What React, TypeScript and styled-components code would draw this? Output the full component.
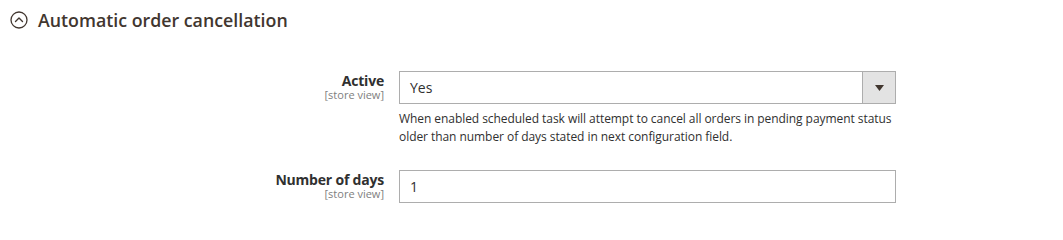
import React from "react";
import styled, { createGlobalStyle } from "styled-components";

const Global = createGlobalStyle`
  html, body { margin: 0; padding: 0; background: #ffffff; }
  body { font-family: "Open Sans", "Liberation Sans", sans-serif; color: #303030; }
  * { box-sizing: border-box; }
`;

const Page = styled.div`
  width: 1063px;
  height: 223px;
  overflow: hidden;
  background: #ffffff;
`;

const Header = styled.div`
  display: flex;
  align-items: center;
  gap: 10px;
  padding: 9px 0 0 10px;
  height: 30px;
`;

const Title = styled.h2`
  margin: 0;
  font-size: 17.8px;
  line-height: 20px;
  font-weight: 600;
  color: #41362f;
`;

const Fieldset = styled.div`
  display: grid;
  grid-template-columns: 384px 497px;
  column-gap: 15px;
  row-gap: 24px;
  padding-top: 41px;
`;

const LabelCell = styled.div`
  display: flex;
  flex-direction: column;
  align-items: flex-end;
  padding-top: 3px;
`;

const Label = styled.span`
  font-size: 14px;
  line-height: 14px;
  font-weight: 700;
  letter-spacing: -0.2px;
  color: #303030;
`;

const Scope = styled.span`
  font-size: 11px;
  line-height: 11px;
  color: #808080;
  margin-top: 1px;
`;

const Control = styled.div`
  display: flex;
  flex-direction: column;
`;

const Select = styled.div`
  display: flex;
  height: 33px;
  border: 1px solid #adadad;
  background: #ffffff;
`;

const SelectValue = styled.div`
  flex: 1;
  display: flex;
  align-items: center;
  padding-left: 10px;
  font-size: 14px;
  color: #303030;
`;

const SelectButton = styled.div`
  width: 33px;
  display: flex;
  align-items: center;
  justify-content: center;
  background: #e3e3e3;
  border-left: 1px solid #adadad;
`;

const Input = styled.div`
  height: 33px;
  border: 1px solid #adadad;
  background: #ffffff;
  display: flex;
  align-items: center;
  padding-left: 10px;
  font-size: 14px;
  color: #303030;
`;

const Note = styled.p`
  margin: 6px 0 0;
  font-size: 12px;
  line-height: 18px;
  letter-spacing: -0.06px;
  color: #303030;
`;

const Field: React.FC<{ label: string; children: React.ReactNode }> = ({ label, children }) => (
  <>
    <LabelCell>
      <Label>{label}</Label>
      <Scope>[store view]</Scope>
    </LabelCell>
    <Control>{children}</Control>
  </>
);

export default function App() {
  return (
    <Page>
      <Global />
      <Header>
        <svg width="18" height="18" viewBox="0 0 18 18">
          <circle cx="9" cy="9" r="8" fill="none" stroke="#41362f" strokeWidth="1.3" />
          <path d="M5.5 10.6 L9 7.1 L12.5 10.6" fill="none" stroke="#41362f" strokeWidth="1.4" strokeLinecap="round" strokeLinejoin="round" />
        </svg>
        <Title>Automatic order cancellation</Title>
      </Header>
      <Fieldset>
        <Field label="Active">
          <Select>
            <SelectValue>Yes</SelectValue>
            <SelectButton>
              <svg width="9" height="6" viewBox="0 0 9 6">
                <path d="M0 0 H9 L4.5 6 Z" fill="#41362f" />
              </svg>
            </SelectButton>
          </Select>
          <Note>
            When enabled scheduled task will attempt to cancel all orders in pending payment status older than number of days stated in next configuration field.
          </Note>
        </Field>
        <Field label="Number of days">
          <Input>1</Input>
        </Field>
      </Fieldset>
    </Page>
  );
}
